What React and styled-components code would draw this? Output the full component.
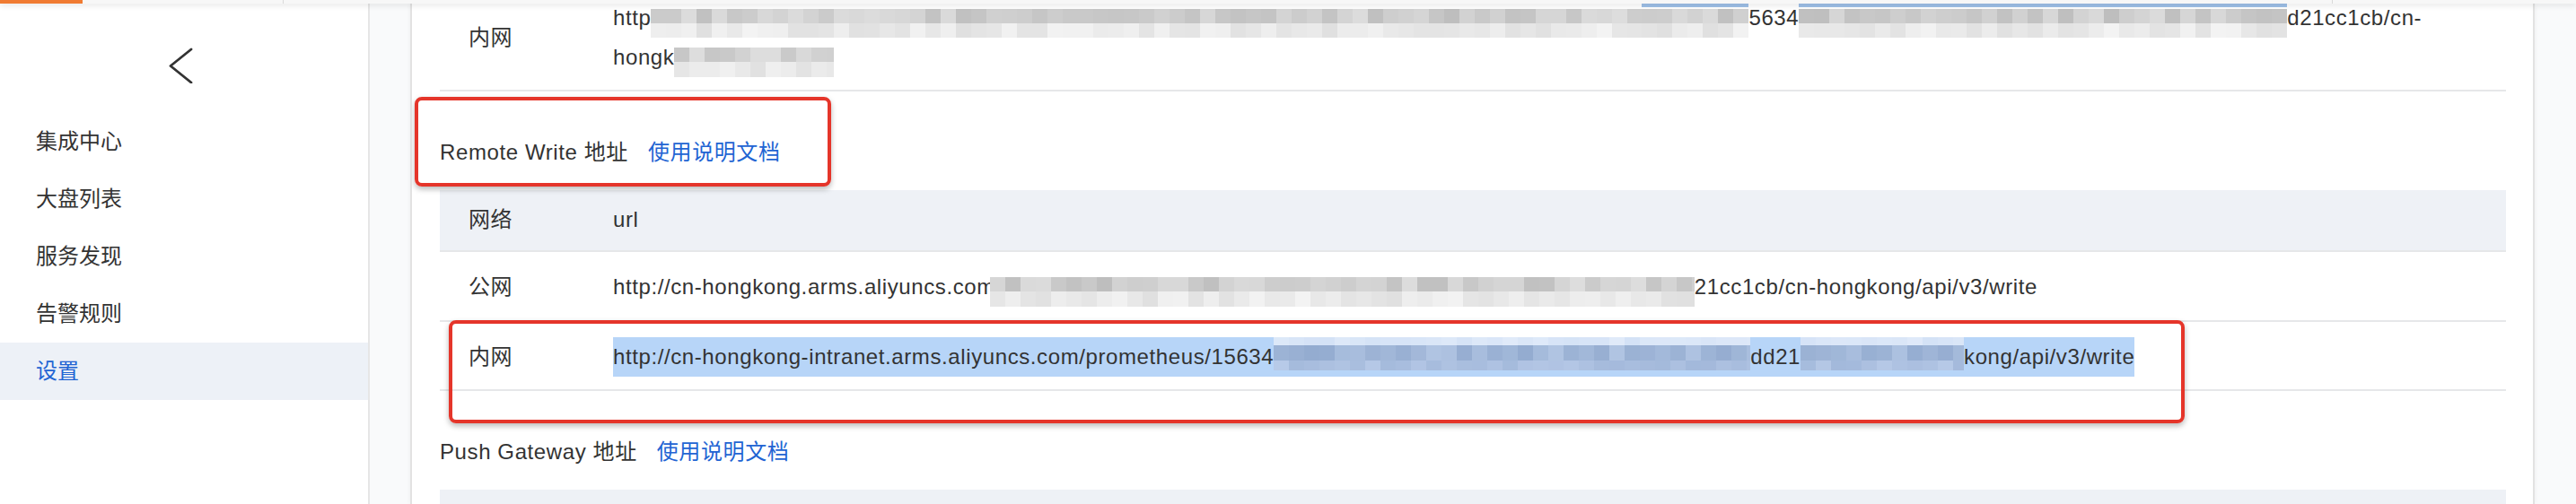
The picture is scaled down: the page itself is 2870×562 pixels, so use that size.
import React from 'react';
import styled, { createGlobalStyle } from 'styled-components';

const GlobalStyle = createGlobalStyle`
  html, body {
    margin: 0;
    padding: 0;
  }
  body {
    background: #f9fafb;
    font-family: "Liberation Sans", "Noto Sans CJK SC", sans-serif;
    color: #333;
  }
`;

const Page = styled.div`
  width: 2870px;
  height: 562px;
  overflow: hidden;
  display: flex;
  flex-direction: column;
`;

const TopBar = styled.div`
  position: relative;
  z-index: 3;
  flex: none;
  height: 4px;
  display: flex;
  background: #f7f7f7;
  box-shadow: 0 2px 6px rgba(0, 0, 0, 0.12);
`;

const Brand = styled.div`
  width: 92px;
  background: #f07b32;
`;

const TopDivider = styled.div`
  width: 1px;
  background: #d9d9d9;
  margin-left: ${p => p.$gap}px;
`;

const Body = styled.div`
  flex: 1;
  min-height: 0;
  display: flex;
`;

const Sidebar = styled.nav`
  flex: none;
  width: 412px;
  box-sizing: border-box;
  background: #fff;
  border-right: 2px solid #e6e6e6;
`;

const BackRow = styled.div`
  padding: 49px 0 33px 188px;
  line-height: 0;
`;

const MenuItem = styled.div`
  height: 64px;
  line-height: 64px;
  padding-left: 40px;
  font-size: 24px;
  color: ${p => (p.$active ? '#2264d3' : '#333')};
  background: ${p => (p.$active ? '#edf1f7' : 'transparent')};
`;

const Card = styled.main`
  position: relative;
  flex: 1;
  min-width: 0;
  margin: 0 46px 0 45px;
  padding: 0 30px 0 31px;
  background: #fff;
  border-left: 2px solid #e2e2e2;
  border-right: 2px solid #e2e2e2;
  box-shadow: 0 0 6px rgba(0, 0, 0, 0.05);
  overflow: hidden;
`;

const Table = styled.div`
  margin-top: ${p => (p.$scrolled ? '-23.5px' : '0')};
`;

const Row = styled.div`
  display: grid;
  grid-template-columns: 161px 1fr;
  align-items: center;
  min-height: ${p => (p.$head ? '44px' : '0')};
  padding: ${p => (p.$head ? '11px 0 12px' : '17px 0 14.5px')};
  background: ${p => (p.$head ? '#eef1f6' : 'transparent')};
  border-bottom: 2px solid #e6e7e9;
`;

const Cell = styled.div`
  padding-left: 32px;
  font-size: 24px;
  line-height: 44px;
  letter-spacing: 0.6px;
  color: #333;
`;

const Line = styled.div`
  white-space: nowrap;
  height: 44px;
`;

const Selected = styled.span`
  display: inline-block;
  height: 44px;
  background: #b7d5f8;
`;

const SectionTitle = styled.div`
  padding: 46px 0 20px;
  font-size: 24px;
  line-height: 44px;
  letter-spacing: 0.6px;
  color: #333;
`;

const DocLink = styled.a`
  margin-left: 22px;
  color: #2264d3;
  text-decoration: none;
`;

const Mark = styled.div`
  position: absolute;
  left: ${p => p.$x}px;
  top: ${p => p.$y}px;
  width: ${p => p.$w}px;
  height: ${p => p.$h}px;
  box-sizing: border-box;
  border: 4px solid #e5352a;
  border-radius: 8px;
  box-shadow: 0 3px 6px rgba(0, 0, 0, 0.28);
  pointer-events: none;
`;

const MosaicSvg = styled.svg`
  display: inline-block;
  vertical-align: top;
  margin-left: ${p => p.$shift || 0}px;
`;

const TONES = {
  blue: [[157, 191, 231], [157, 191, 231]],
  dark: [[190, 190, 190], [222, 222, 222]],
  light: [[224, 224, 224], [243, 243, 243]],
  selLight: [[212, 226, 246], [224, 234, 249]],
  selDark: [[148, 172, 208], [176, 196, 226]],
  selMid: [[162, 184, 218], [184, 202, 232]],
};

function Mosaic({ width, bands, seed = 1, shift }) {
  const cell = 17;
  const cols = Math.ceil(width / cell);
  let s = seed * 7919;
  const rnd = () => {
    s = (s * 9301 + 49297) % 233280;
    return s / 233280;
  };
  const rects = [];
  let y = 0;
  bands.forEach((b, bi) => {
    if (b.tone !== 'none') {
      const [lo, hi] = TONES[b.tone];
      for (let c = 0; c < cols; c++) {
        const t = rnd();
        const col = lo.map((v, i) => Math.round(v + (hi[i] - v) * t));
        rects.push(
          <rect
            key={`${bi}-${c}`}
            x={c * cell}
            y={y}
            width={cell + 0.5}
            height={b.h}
            fill={`rgb(${col.join(',')})`}
          />
        );
      }
    }
    y += b.h;
  });
  return (
    <MosaicSvg $shift={shift} width={width} height={44} viewBox={`0 0 ${width} 44`}>
      {rects}
    </MosaicSvg>
  );
}

const firstLine = [
  { h: 12, tone: 'none' },
  { h: 16, tone: 'dark' },
  { h: 16, tone: 'light' },
];
const firstLineBlue = [
  { h: 10, tone: 'blue' },
  { h: 2, tone: 'none' },
  { h: 16, tone: 'dark' },
  { h: 16, tone: 'light' },
];
const plainLine = [
  { h: 11, tone: 'none' },
  { h: 16, tone: 'dark' },
  { h: 17, tone: 'light' },
];
const selectedLine = [
  { h: 9, tone: 'selLight' },
  { h: 17, tone: 'selDark' },
  { h: 11, tone: 'selMid' },
];

const menu = ['集成中心', '大盘列表', '服务发现', '告警规则', '设置'];

function Back() {
  return (
    <svg width="28" height="40" viewBox="0 0 28 40">
      <polyline
        points="25,2 2,20.5 25,39"
        fill="none"
        stroke="#333"
        strokeWidth="2.8"
        strokeLinecap="round"
        strokeLinejoin="round"
      />
    </svg>
  );
}

export default function App() {
  return (
    <>
      <GlobalStyle />
      <Page>
        <TopBar>
          <Brand />
          <TopDivider $gap={223} />
          <TopDivider $gap={2282} />
        </TopBar>
        <Body>
          <Sidebar>
            <BackRow>
              <Back />
            </BackRow>
            {menu.map(m => (
              <MenuItem key={m} $active={m === '设置'}>
                {m}
              </MenuItem>
            ))}
          </Sidebar>

          <Card>
            <Table $scrolled>
              <Row>
                <Cell>内网</Cell>
                <Cell>
                  <Line>
                    http
                    <Mosaic width={1104} bands={firstLine} seed={3} />
                    <Mosaic width={119} bands={firstLineBlue} seed={5} />
                    5634
                    <Mosaic width={544} bands={firstLineBlue} seed={7} />
                    d21cc1cb/cn-
                  </Line>
                  <Line>
                    hongk
                    <Mosaic width={178} bands={plainLine} seed={11} />
                  </Line>
                </Cell>
              </Row>
            </Table>

            <SectionTitle>
              Remote Write 地址<DocLink>使用说明文档</DocLink>
            </SectionTitle>
            <Table>
              <Row $head>
                <Cell>网络</Cell>
                <Cell>url</Cell>
              </Row>
              <Row>
                <Cell>公网</Cell>
                <Cell>
                  <Line>
                    http://cn-hongkong.arms.aliyuncs.com
                    <Mosaic width={785} bands={plainLine} seed={13} shift={-6} />
                    21cc1cb/cn-hongkong/api/v3/write
                  </Line>
                </Cell>
              </Row>
              <Row>
                <Cell>内网</Cell>
                <Cell>
                  <Line>
                    <Selected>
                      http://cn-hongkong-intranet.arms.aliyuncs.com/prometheus/15634
                      <Mosaic width={531} bands={selectedLine} seed={17} />
                      dd21
                      <Mosaic width={182} bands={selectedLine} seed={19} />
                      kong/api/v3/write
                    </Selected>
                  </Line>
                </Cell>
              </Row>
            </Table>

            <SectionTitle>
              Push Gateway 地址<DocLink>使用说明文档</DocLink>
            </SectionTitle>
            <Table>
              {/* header row of the next table, its labels fall below the fold */}
              <Row $head>
                <Cell />
                <Cell />
              </Row>
            </Table>

            <Mark $x={3} $y={104} $w={464} $h={100} />
            <Mark $x={41} $y={353} $w={1934} $h={115} />
          </Card>
        </Body>
      </Page>
    </>
  );
}
